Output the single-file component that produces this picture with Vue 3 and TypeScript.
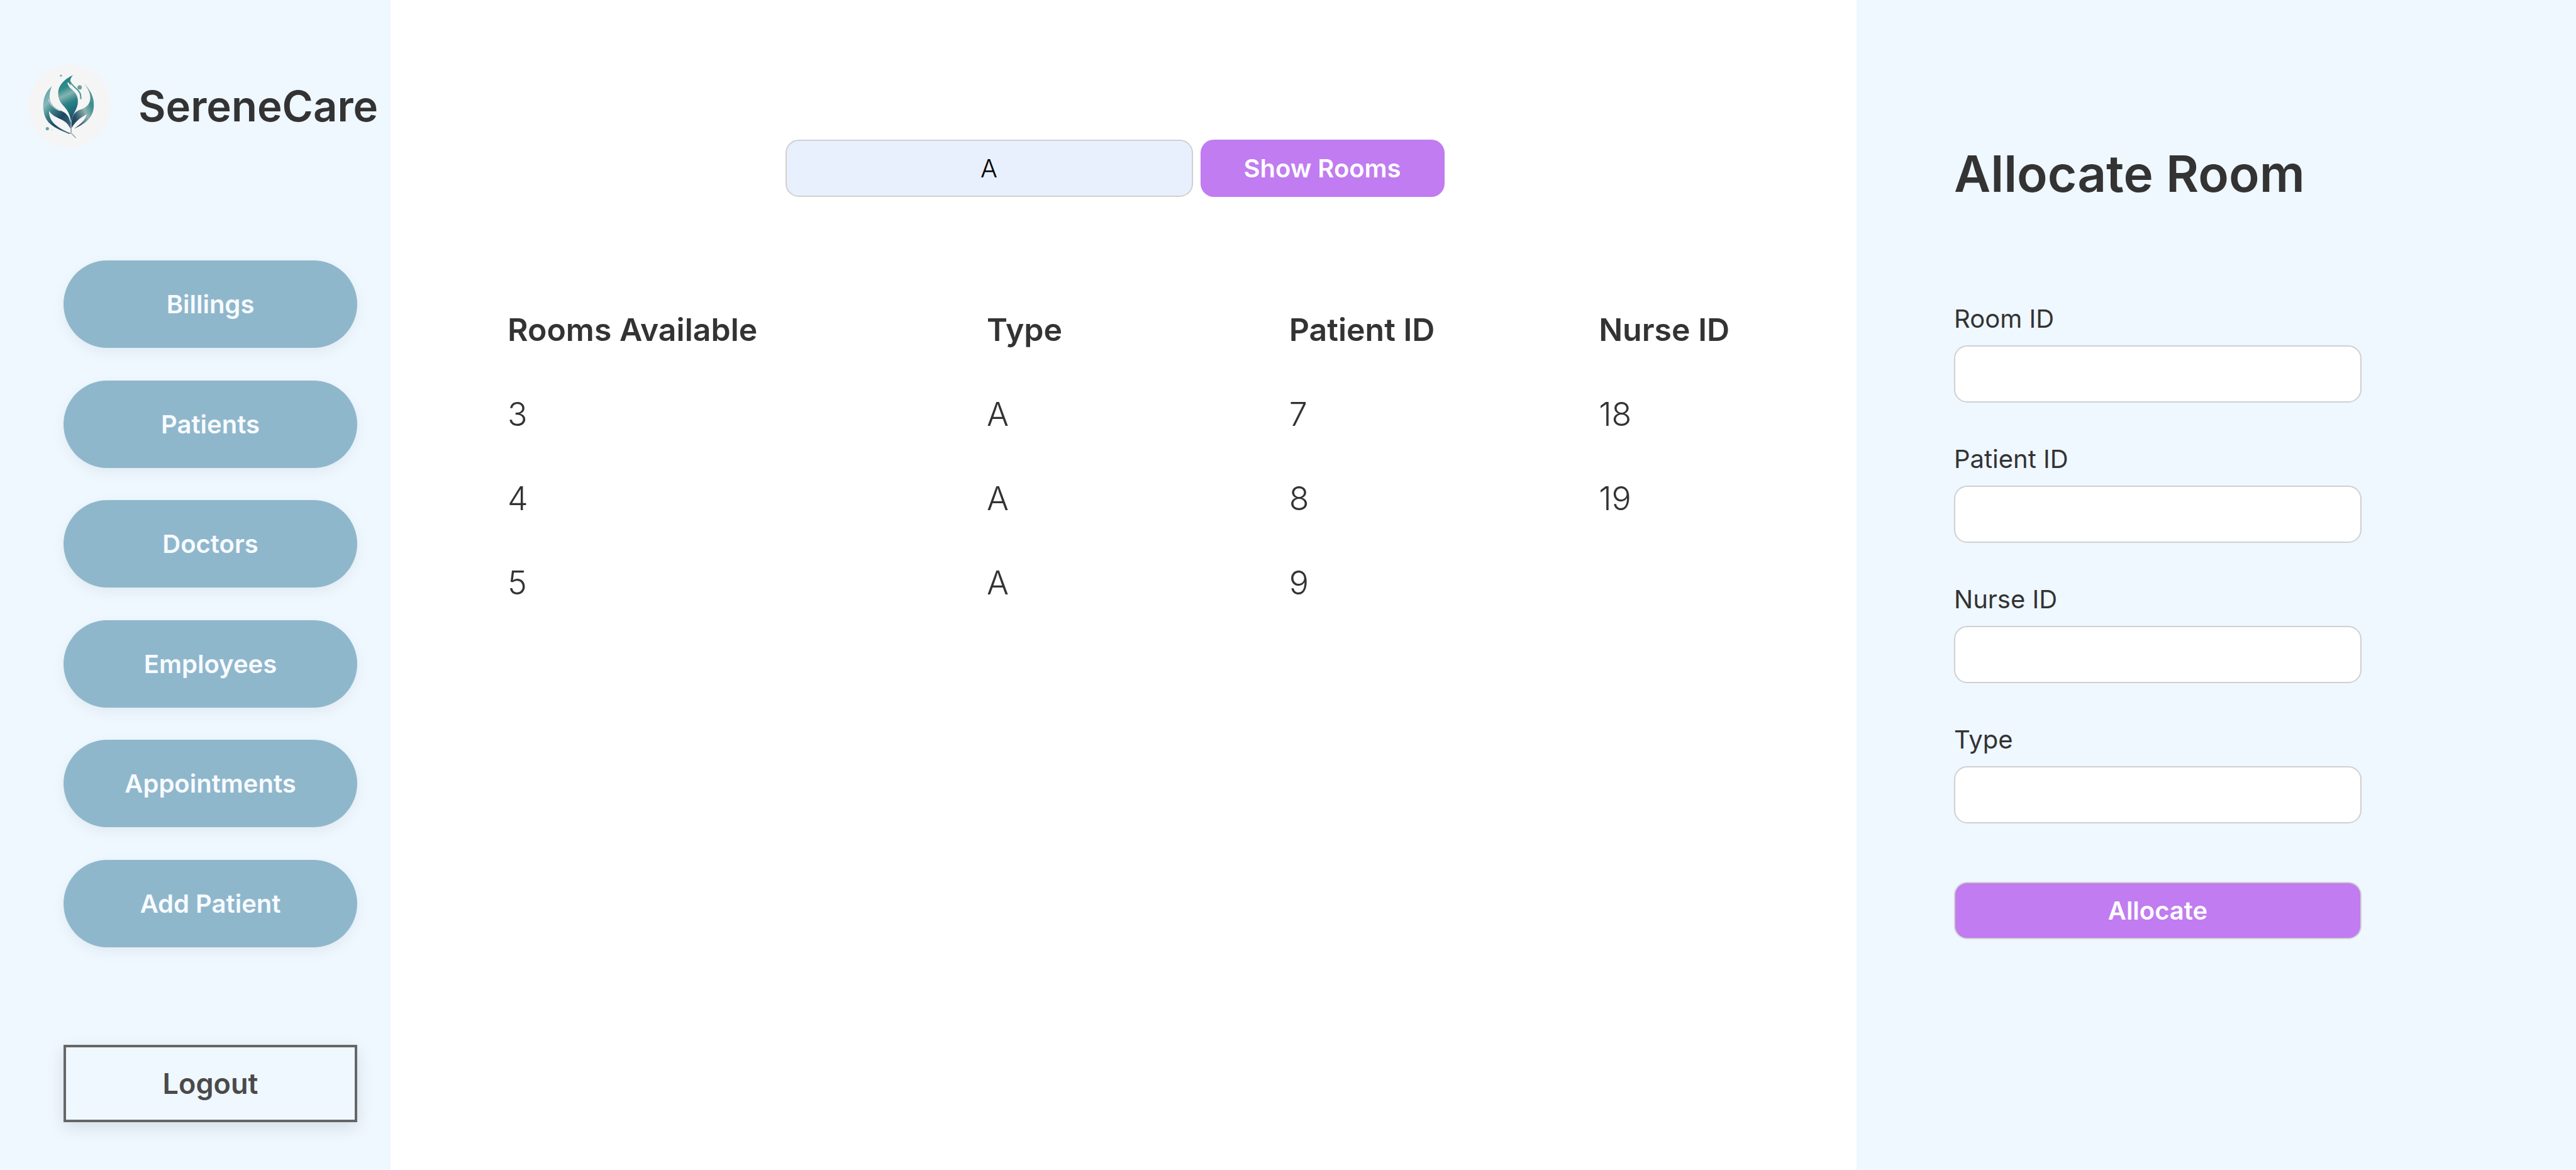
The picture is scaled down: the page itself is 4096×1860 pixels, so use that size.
<script setup lang="ts">
import { ref } from 'vue'

interface Room {
  id: number
  type: string
  patient: number
  nurse: number | null
}

interface Field {
  id: string
  label: string
}

const links: string[] = ['Billings', 'Patients', 'Doctors', 'Employees', 'Appointments', 'Add Patient']

const rooms: Room[] = [
  { id: 3, type: 'A', patient: 7, nurse: 18 },
  { id: 4, type: 'A', patient: 8, nurse: 19 },
  { id: 5, type: 'A', patient: 9, nurse: null },
]

const fields: Field[] = [
  { id: 'room-id', label: 'Room ID' },
  { id: 'patient-id', label: 'Patient ID' },
  { id: 'nurse-id', label: 'Nurse ID' },
  { id: 'room-type', label: 'Type' },
]

const roomType = ref('A')
</script>

<template>
  <div class="page">
    <aside class="sidebar">
      <div class="brand">
        <svg class="logo" viewBox="-26 31 454 454" aria-hidden="true">
          <defs>
            <linearGradient id="leaf-centre" x1="0" y1="0" x2="0.2" y2="1">
              <stop offset="0" stop-color="#1f7d7d" />
              <stop offset="0.32" stop-color="#2f8c8a" />
              <stop offset="0.48" stop-color="#86b3b0" />
              <stop offset="0.66" stop-color="#2b8488" />
              <stop offset="1" stop-color="#17566c" />
            </linearGradient>
            <linearGradient id="leaf-left" x1="0" y1="0" x2="0.7" y2="1">
              <stop offset="0" stop-color="#4f9a9c" />
              <stop offset="0.3" stop-color="#86b9b9" />
              <stop offset="0.5" stop-color="#3b8189" />
              <stop offset="0.75" stop-color="#1d4660" />
              <stop offset="1" stop-color="#39647c" />
            </linearGradient>
            <linearGradient id="leaf-right" x1="1" y1="0" x2="0" y2="1">
              <stop offset="0" stop-color="#5f9f9f" />
              <stop offset="0.3" stop-color="#3d8f91" />
              <stop offset="0.5" stop-color="#8fb3b0" />
              <stop offset="0.8" stop-color="#234b66" />
              <stop offset="1" stop-color="#1d4660" />
            </linearGradient>
          </defs>
          <circle cx="201" cy="258" r="227" fill="#f5f5f5" />
          <path
            fill="url(#leaf-centre)"
            d="M221 87C186 104 139 135 139 187C139 236 163 248 184 276C200 298 207 322 209 350C214 318 228 296 238 274C252 243 252 207 228 180C212 162 188 150 193 128C200 138 206 140 211 146C200 122 206 102 221 87Z"
          />
          <path d="M192 130C200 155 240 165 252 198C258 209 262 214 264 220" fill="none" stroke="#f5f5f5" stroke-width="7" />
          <path d="M204 122C214 150 250 164 260 190C264 202 263 212 264 220" fill="none" stroke="#4a9492" stroke-width="7" />
          <path
            fill="url(#leaf-left)"
            d="M105 149C50 192 48 268 68 320C86 362 130 384 200 412L206 408C160 388 118 366 100 334C90 316 88 300 88 285C100 306 124 318 150 330C176 342 194 356 206 384L206 350C200 316 184 296 154 284C120 271 96 252 92 216C90 190 96 166 105 149Z"
          />
          <path d="M86 222C94 254 116 274 150 285" fill="none" stroke="#f5f5f5" stroke-width="3" />
          <path
            fill="url(#leaf-right)"
            d="M282 136C318 172 346 222 332 282C320 334 276 360 226 384C262 358 290 334 296 304C270 318 240 334 212 380L212 344C216 304 236 284 266 276C300 266 322 240 314 196C309 172 296 152 282 136Z"
          />
          <path d="M208 345L210 384C211 396 210 402 208 412" fill="none" stroke="#5b7f92" stroke-width="4" />
          <path d="M213 410L236 434" fill="none" stroke="#8aa6b2" stroke-width="5" />
          <circle cx="154" cy="91" r="6" fill="#86a9b8" />
          <circle cx="257" cy="156" r="12" fill="#6ba097" />
          <circle cx="79" cy="383" r="9" fill="#66a3a3" />
          <circle cx="105" cy="391" r="3" fill="#b8d0d0" />
        </svg>
        <span class="brand-name">SereneCare</span>
      </div>
      <nav class="nav">
        <button v-for="link in links" :key="link" type="button" class="nav-button">{{ link }}</button>
      </nav>
      <button type="button" class="logout">Logout</button>
    </aside>

    <main class="main">
      <form class="search" @submit.prevent>
        <input v-model="roomType" class="search-input" type="text" aria-label="Room type" />
        <button type="submit" class="search-button">Show Rooms</button>
      </form>
      <table class="rooms">
        <colgroup>
          <col class="col-room" />
          <col class="col-type" />
          <col class="col-patient" />
          <col />
        </colgroup>
        <thead>
          <tr>
            <th scope="col">Rooms Available</th>
            <th scope="col">Type</th>
            <th scope="col">Patient ID</th>
            <th scope="col">Nurse ID</th>
          </tr>
        </thead>
        <tbody>
          <tr v-for="room in rooms" :key="room.id">
            <td>{{ room.id }}</td>
            <td>{{ room.type }}</td>
            <td>{{ room.patient }}</td>
            <td>{{ room.nurse }}</td>
          </tr>
        </tbody>
      </table>
    </main>

    <section class="panel">
      <h1 class="title">Allocate Room</h1>
      <form class="form" @submit.prevent>
        <div v-for="field in fields" :key="field.id" class="field">
          <label :for="field.id">{{ field.label }}</label>
          <input :id="field.id" class="field-input" type="text" />
        </div>
        <button type="submit" class="allocate">Allocate</button>
      </form>
    </section>
  </div>
</template>

<style>
body {
  margin: 0;
  background: #fff;
}
</style>

<style scoped>
.page {
  display: grid;
  grid-template-columns: 621px 1fr 1144px;
  min-height: 100vh;
  color: #333;
  font-family: Inter, "Liberation Sans", sans-serif;
  font-size: 40px;
}

.page *,
.page {
  box-sizing: border-box;
}

button,
input {
  margin: 0;
  font-family: inherit;
}

button {
  cursor: pointer;
}

.sidebar {
  display: flex;
  flex-direction: column;
  padding: 103px 53px 76px 101px;
  background: #eff7ff;
}

.brand {
  display: flex;
  align-items: center;
  gap: 44px;
  margin: 0 -50px 180px -56px;
}

.logo {
  flex: none;
  width: 131px;
  height: 131px;
}

.brand-name {
  font-size: 67px;
  font-weight: 600;
  white-space: nowrap;
}

.nav {
  display: flex;
  flex-direction: column;
  justify-content: space-between;
  min-height: 1092px;
}

.nav-button {
  height: 139px;
  border: 0;
  border-radius: 70px;
  background: #8fb7cc;
  box-shadow: 0 7px 22px rgba(0, 0, 0, 0.06);
  color: #f8fbff;
  font-size: 40px;
  font-weight: 600;
}

.logout {
  height: 123px;
  margin-top: 155px;
  border: 4px solid #666;
  background: #eff7ff;
  box-shadow: 0 8px 26px rgba(0, 0, 0, 0.11);
  color: #4a4a4a;
  font-size: 45px;
  font-weight: 600;
}

.main {
  padding: 222px 191px 0 186px;
}

.search {
  display: flex;
  justify-content: center;
  gap: 12px;
  margin: 0 23px 144px 0;
}

.search-input,
.search-button,
.field-input,
.allocate {
  height: 91px;
  border: 2px solid #d0d0d0;
  border-radius: 21px;
  font-size: 40px;
}

.search-input {
  width: 648px;
  background: #e8f0fe;
  color: #000;
  font-weight: 300;
  text-align: center;
}

.search-button,
.allocate {
  background: #c07cf0;
  color: #fff;
  font-weight: 600;
}

.search-button {
  width: 388px;
  border: 0;
}

.rooms {
  width: 100%;
  border-collapse: collapse;
  table-layout: fixed;
}

.col-room {
  width: 39%;
}

.col-type {
  width: 24.6%;
}

.col-patient {
  width: 25.2%;
}

.rooms th,
.rooms td {
  height: 134px;
  padding: 0;
  text-align: left;
  white-space: nowrap;
}

.rooms th {
  font-size: 50px;
  font-weight: 600;
}

.rooms td {
  font-size: 52px;
  font-weight: 300;
}

.panel {
  padding: 236px 155px 0;
  background: #eff7ff;
}

.title {
  margin: 0 0 165px;
  font-size: 80px;
  font-weight: 600;
  line-height: 80px;
  white-space: nowrap;
}

.form {
  display: flex;
  flex-direction: column;
  gap: 64px;
  max-width: 648px;
}

.field {
  display: flex;
  flex-direction: column;
  gap: 16px;
}

.field label {
  line-height: 52px;
}

.field-input {
  width: 100%;
  padding: 0 24px;
  background: #fff;
  color: #333;
}

.allocate {
  margin-top: 29px;
}
</style>
